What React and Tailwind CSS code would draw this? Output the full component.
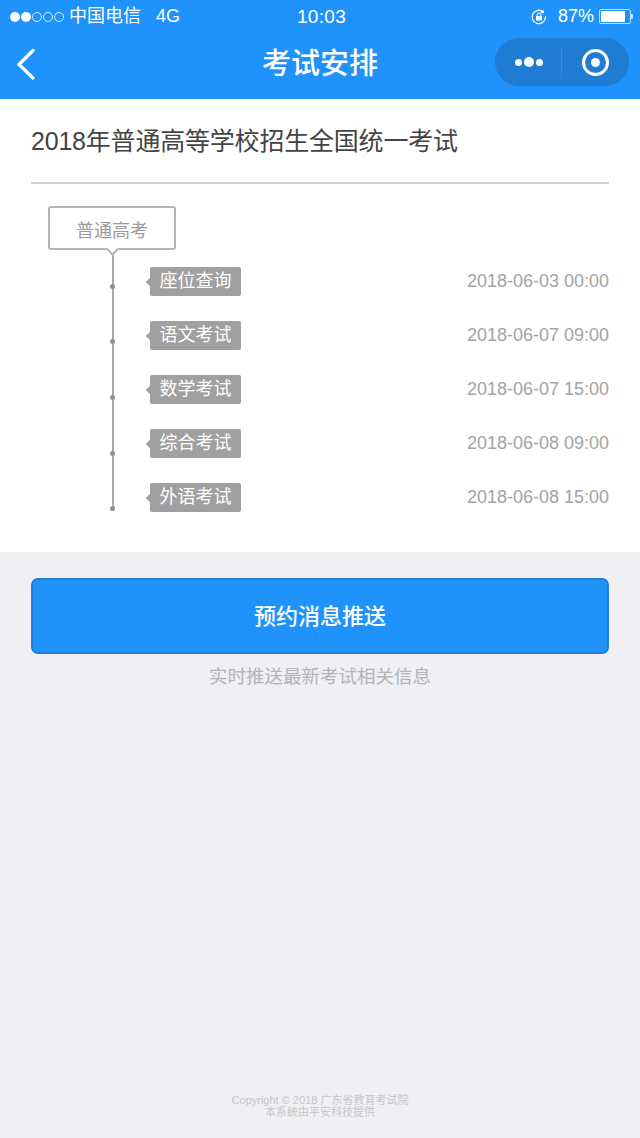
const FONT = "font-['Liberation_Sans','Noto_Sans_CJK_SC',sans-serif]";

const exams = [
  { name: "座位查询", time: "2018-06-03 00:00", dot: "top-[17px]" },
  { name: "语文考试", time: "2018-06-07 09:00", dot: "top-[18px]" },
  { name: "数学考试", time: "2018-06-07 15:00", dot: "top-[20px]" },
  { name: "综合考试", time: "2018-06-08 09:00", dot: "top-[22px]" },
  { name: "外语考试", time: "2018-06-08 15:00", dot: "top-[23px]" },
];

function SignalDots() {
  return (
    <div className="flex items-center gap-[1px]">
      {[0, 1].map((i) => (
        <span key={i} className="w-[10px] h-[10px] rounded-full bg-white" />
      ))}
      {[0, 1, 2].map((i) => (
        <span key={i} className="w-[10px] h-[10px] rounded-full border border-white/80" />
      ))}
    </div>
  );
}

function RotationLock() {
  return (
    <svg width="18" height="18" viewBox="0 0 18 18" fill="none" stroke="white" strokeWidth="1.3">
      <path d="M15.5 9a6.7 6.7 0 1 1-2-4.8" strokeLinecap="round" />
      <path d="M13.2 2.4v2.4h-2.4" strokeWidth="1" fill="white" />
      <rect x="6" y="8" width="6" height="4.5" rx="0.6" fill="white" stroke="none" />
      <path d="M7.2 8V6.9a1.8 1.8 0 0 1 3.6 0V8" strokeWidth="1" />
    </svg>
  );
}

function Battery() {
  return (
    <div className="flex items-center">
      <div className="w-[32px] h-[15px] rounded-[2px] border border-white/70 p-[1px]">
        <div className="h-full w-[87%] bg-white rounded-[1px]" />
      </div>
      <div className="w-[2px] h-[5px] bg-white/70 rounded-r-[1px]" />
    </div>
  );
}

function StatusBar() {
  return (
    <div className="relative flex items-center justify-between h-[33px] pl-[10px] pr-[7px] text-white">
      <div className="flex items-center gap-[5px]">
        <SignalDots />
        <span className="text-[18px] leading-[33px]">中国电信</span>
        <span className="text-[18px] leading-[33px] ml-[10px]">4G</span>
      </div>
      <span className="absolute left-[297px] top-0 text-[19px] leading-[33px] tracking-[0.3px]">10:03</span>
      <div className="flex items-center">
        <RotationLock />
        <span className="text-[18px] leading-[33px] ml-[10px] mr-[5px]">87%</span>
        <Battery />
      </div>
    </div>
  );
}

function NavBar() {
  return (
    <div className="relative flex items-center justify-center h-[66px]">
      <svg className="absolute left-[16px] top-[15px]" width="20" height="32" viewBox="0 0 20 32" fill="none">
        <path d="M17 2.5 3 16.5l14 13.5" stroke="white" strokeWidth="3.2" strokeLinecap="round" strokeLinejoin="round" />
      </svg>
      <h1 className="text-[29px] leading-[40px] font-medium text-white -mt-[4px]">考试安排</h1>
      <div className="absolute left-[495px] top-[5px] w-[134px] h-[48px] rounded-full bg-[#1f7cd3] flex items-center">
        <div className="w-[66px] flex items-center justify-center gap-[2px] pl-[2px]">
          <span className="w-[7px] h-[7px] rounded-full bg-white" />
          <span className="w-[10px] h-[10px] rounded-full bg-white" />
          <span className="w-[7px] h-[7px] rounded-full bg-white" />
        </div>
        <div className="w-px h-[32px] bg-white/10" />
        <div className="flex-1 flex items-center justify-center">
          <div className="w-[27px] h-[27px] rounded-full border-[3px] border-white flex items-center justify-center">
            <span className="w-[9px] h-[9px] rounded-full bg-white" />
          </div>
        </div>
      </div>
    </div>
  );
}

function ExamRow({ exam }) {
  return (
    <div className="relative flex items-start h-[54px]">
      <span className={`absolute left-[79px] w-[5px] h-[5px] rounded-full bg-[#8f8f8f] ${exam.dot}`} />
      <div className="relative ml-[119px] w-[91px] h-[29px] bg-[#a0a0a0] rounded-[2px] text-center text-white text-[18px] leading-[28px]">
        <span className="absolute left-[-3px] top-[12px] w-[6px] h-[6px] rotate-45 bg-[#a0a0a0]" />
        <span className="relative">{exam.name}</span>
      </div>
      <span className="ml-auto text-[18px] leading-[28px] text-[#a3a3a3]">{exam.time}</span>
    </div>
  );
}

export default function App() {
  return (
    <div className={`${FONT} flex flex-col h-[1138px] w-[640px] overflow-hidden bg-[#efeff4]`}>
      <header className="bg-[#1f93fb]">
        <StatusBar />
        <NavBar />
      </header>

      <section className="bg-white h-[453px] px-[31px]">
        <h2 className="h-[85px] pt-[24px] text-[25px] leading-[36px] text-[#444444] border-b-2 border-[#d2d2d2] tracking-[-0.2px]">
          2018年普通高等学校招生全国统一考试
        </h2>
        <div className="relative mt-[22px]">
          <div className="absolute left-[80.5px] top-[44px] h-[257px] w-[2px] bg-[#a8a8a8]" />
          <div className="relative w-[128px] h-[44px] ml-[17px] border-2 border-[#b4b4b4] rounded-[3px] bg-white text-center text-[18px] leading-[46px] text-[#9a9a9a]">
            普通高考
            <span className="absolute left-[58px] bottom-[-6px] w-[9px] h-[9px] rotate-45 border-r-2 border-b-2 border-[#b4b4b4] bg-white" />
          </div>
          <div className="mt-[17px]">
            {exams.map((exam) => (
              <ExamRow key={exam.name} exam={exam} />
            ))}
          </div>
        </div>
      </section>

      <div className="px-[31px] pt-[26px]">
        <button className="block w-full h-[76px] rounded-[7px] bg-[#1f93fb] border-2 border-[#1e7fdc] text-white text-[22px] font-medium">
          预约消息推送
        </button>
        <p className="mt-[9px] text-center text-[18.5px] leading-[28px] text-[#b4b4b4]">实时推送最新考试相关信息</p>
      </div>

      <footer className="mt-auto pb-[20px] text-center text-[11px] leading-[12px] text-[#c6c6c6]">
        <p>Copyright © 2018 广东省教育考试院</p>
        <p>本系统由平安科技提供</p>
      </footer>
    </div>
  );
}
